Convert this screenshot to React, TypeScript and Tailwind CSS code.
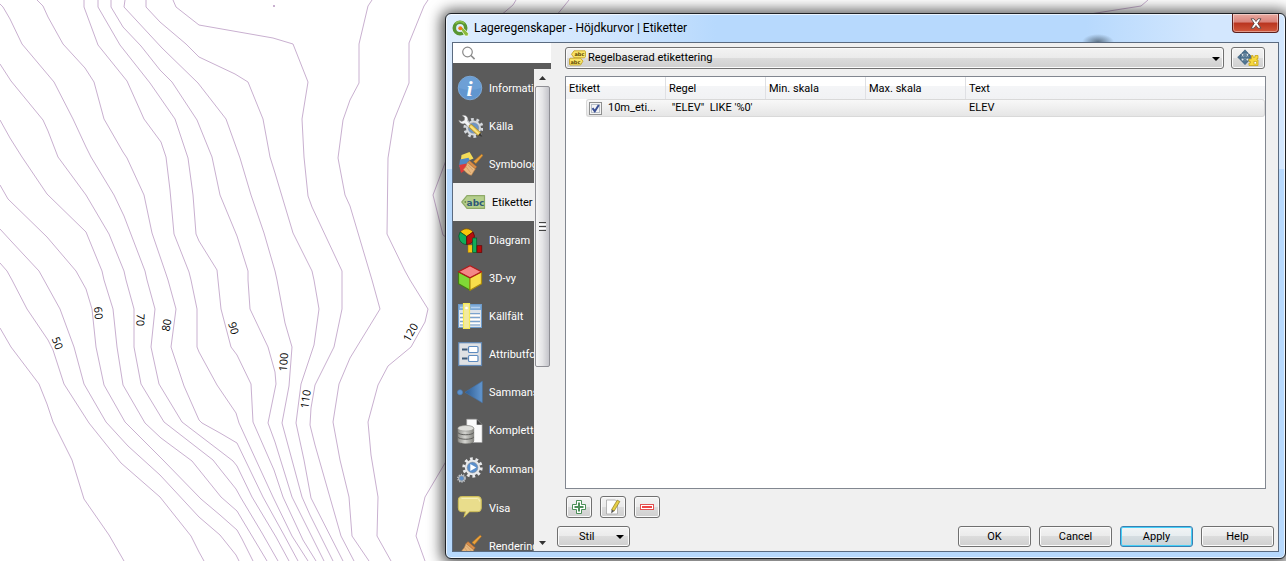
import type { ReactNode } from "react";

const contours: string[] = [
  "0,328 11,347 39,384 47,404 53,422 72,460 84,499 109,535 124,561",
  "0,263 7,271 12,280 27,309 48,340 53,350 64,384 89,423 121,463 160,497 191,536 199,552 204,561",
  "0,229 11,241 39,271 44,280 60,309 74,347 84,384 106,422 128,446 160,475 199,517 220,535 236,555 239,561",
  "0,185 8,199 47,237 76,271 81,280 86,289 92,309 96,347 104,385 125,422 163,460 201,499 220,515 237,530 242,539 253,561",
  "0,120 10,138 22,157 47,194 86,232 102,271 104,280 113,309 117,347 123,385 145,423 161,438 192,461 221,497 237,511 243,521 267,561",
  "0,64 11,81 43,120 48,131 58,157 86,195 109,234 124,271 126,280 134,309 134,347 141,384 164,422 213,460 220,469 236,489 241,498 262,533 278,561",
  "0,4 3,7 10,19 22,44 54,82 73,119 86,147 91,157 114,195 124,216 145,271 147,280 155,309 151,347 159,384 182,422 220,451 233,461 237,466 252,497 276,537 289,561",
  "37,0 43,6 48,17 63,44 85,68 94,82 104,119 123,152 127,158 144,195 152,233 166,274 168,280 176,309 171,347 184,386 199,420 202,423 220,433 237,443 263,497 284,535 298,561",
  "84,0 84,7 98,45 127,81 144,119 161,142 166,157 170,190 174,234 189,272 191,280 197,309 197,347 199,352 217,385 236,413 239,423 273,497 292,536 308,561",
  "98,0 98,7 120,45 150,83 175,119 188,158 193,195 196,234 199,241 217,270 218,280 221,309 231,347 237,355 251,384 253,422 274,470 283,497 303,540 316,561",
  "111,0 111,7 123,27 141,46 160,70 172,82 197,120 212,157 220,195 237,236 248,271 248,280 250,309 268,347 275,372 276,384 268,423 275,442 292,497 324,561",
  "125,0 124,7 162,48 198,83 226,119 240,158 251,195 264,233 275,271 277,280 285,323 292,347 289,386 282,423 302,497 310,515 333,561",
  "146,0 146,7 160,22 186,44 199,57 235,74 248,82 263,119 270,157 275,173 293,233 312,271 314,280 319,309 314,345 301,384 296,423 304,460 311,498 343,561",
  "173,0 176,7 199,25 273,38 293,44 308,82 302,119 304,157 308,196 312,207 342,271 342,309 334,347 315,385 311,408 310,425 315,445 341,536 354,561",
  "372,0 368,6 359,44 359,83 350,100 343,120 338,158 345,195 350,206 372,280 380,309 350,358 339,384 333,422 340,460 349,497 352,536 369,561",
  "428,0 424,6 409,43 409,83 394,120 388,158 387,234 405,271 410,280 428,309 425,322 411,347 388,366 378,385 368,422 371,455 378,497 377,536 391,561",
  "448,155 433,195 443,235 450,240",
  "448,458 425,497 416,536 425,561",
  "516,0 513,5 500,16",
  "569,0 565,5 556,16",
  "1148,0 1141,6 1090,14",
  "273,6 274,5 275,6 274,7 273,6",
];

const mapLabels = [
  { text: "50", x: 58, y: 343, angle: 68 },
  { text: "60", x: 99, y: 313, angle: 85 },
  { text: "70", x: 141, y: 320, angle: 92 },
  { text: "80", x: 166, y: 325, angle: -82 },
  { text: "90", x: 234, y: 328, angle: 74 },
  { text: "100", x: 283, y: 362, angle: -86 },
  { text: "110", x: 305, y: 399, angle: -82 },
  { text: "120", x: 410, y: 332, angle: -60 },
];

function ContourMap() {
  return (
    <svg className="absolute top-0 left-0" width="1286" height="561" viewBox="0 0 1286 561" aria-label="Höjdkurvor">
      {contours.map((points) => (
        <polyline key={points} points={points} fill="none" stroke="#c9b0d0" strokeWidth="1" />
      ))}
      {mapLabels.map((l) => (
        <text
          key={l.text}
          transform={`translate(${l.x} ${l.y}) rotate(${l.angle})`}
          textAnchor="middle"
          dominantBaseline="central"
          className="fill-black font-['Open_Sans',sans-serif] text-[11px]"
        >
          {l.text}
        </text>
      ))}
    </svg>
  );
}

function Icon({ children }: { children: ReactNode }) {
  return (
    <svg width="26" height="26" viewBox="0 0 26 26" className="shrink-0" aria-hidden="true">
      {children}
    </svg>
  );
}

function Gear({ cx, cy, r, body, hub }: { cx: number; cy: number; r: number; body: string; hub: string }) {
  const tooth = (2 * Math.PI * r) / 20;
  return (
    <g>
      <circle cx={cx} cy={cy} r={r} fill="none" stroke={body} strokeWidth={r * 0.34} strokeDasharray={`${tooth} ${tooth}`} />
      <circle cx={cx} cy={cy} r={r * 0.88} fill={body} />
      <circle cx={cx} cy={cy} r={r * 0.62} fill={hub} stroke="#8d8d8d" strokeWidth="0.5" />
    </g>
  );
}

const infoIcon = (
  <Icon>
    <circle cx="13" cy="13" r="11.8" fill="#6196cf" stroke="#86b1de" strokeWidth="0.8" />
    <path d="M2 13a11 11 0 0 1 22 0q-11 4-22 0z" fill="#75a6da" opacity=".6" />
    <text x="12.6" y="20.5" textAnchor="middle" className="fill-white font-['Liberation_Serif',serif] text-[22px] font-bold italic">
      i
    </text>
  </Icon>
);

const sourceIcon = (
  <Icon>
    <Gear cx={16.5} cy={15} r={8.6} body="#d5d9de" hub="#6d96c6" />
    <path d="M5 2.5c3-1 6 .6 6 4l-.3 1.6 8.8 9.4-2.3 2.3-9.3-9.2c-3 1-5.700-.4-6.200-3.500l3 1.300 2.600-1.200.2-2.700z" fill="#f4f5f6" stroke="#777" strokeWidth="0.5" />
    <path d="M12.200 12.200l2.600-.6 8.700 8-.3 2-2.200.9-8.600-8z" fill="#f3d35a" stroke="#93761b" strokeWidth="0.7" />
    <path d="M13.500 13.200l8.300 7.800" stroke="#fff0a0" strokeWidth="1" />
    <path d="M21 22.500l2.300-2.700 2 4z" fill="#3b3b3b" />
  </Icon>
);

const brush = (
  <g>
    <path d="M24.700 3.200l1.200 1.200-7 8.200-2.400-2z" fill="#eba23c" stroke="#b8761f" strokeWidth="0.6" />
    <path d="M12.500 9.500l7.300 6.300-1.600 2-7.700-6.300z" fill="#d98d48" stroke="#a0602a" strokeWidth="0.5" />
    <path d="M10.500 11.500l7.800 6.500-3.900 6.300c-2.600-.5-5.900-3-8.100-5.900 2.300-1.600 3.200-4 4.200-6.900z" fill="#e8b880" stroke="#bf8546" strokeWidth="0.6" />
    <path d="M9.300 16l4.500 6M11 14l5 5.200" stroke="#cf9657" strokeWidth="0.7" />
  </g>
);

const symbologyIcon = (
  <Icon>
    <path d="M4.500 4l8-3 4 6.500-6 2.500-7 1.500z" fill="#f4dc58" />
    <path d="M3 8.500l8.500-1.700 2 3.700-2 4-9.500 1.500z" fill="#5187c4" />
    <path d="M2 14l8-1.500-.5 6-5.500 3.500z" fill="#dc3a3a" />
    {brush}
  </Icon>
);

const labelIcon = (
  <svg width="25" height="26" viewBox="0 0 25 26" className="shrink-0" aria-hidden="true">
    <path d="M6 6.600h17.500v12.800H6L.8 13z" fill="#b5cf8c" stroke="#8faa68" strokeWidth="1.200" strokeLinejoin="round" />
    <circle cx="4.300" cy="13" r="0.900" fill="#6f8e46" />
    <text x="14.500" y="16.500" textAnchor="middle" className="fill-[#2e5878] font-['DejaVu_Sans',sans-serif] text-[9px] font-bold">
      abc
    </text>
  </svg>
);

const diagramIcon = (
  <Icon>
    <path d="M9.700 9.500L3.200 5A8 8 0 0 1 16 5z" fill="#f8c60a" stroke="#7b4b08" strokeWidth="0.700" />
    <path d="M9.700 9.500V17.500A8 8 0 0 1 3.200 5z" fill="#0fae5b" stroke="#054f27" strokeWidth="0.700" />
    <path d="M9.700 9.500L16 5A8 8 0 0 1 9.700 17.500z" fill="#b80f0f" stroke="#560606" strokeWidth="0.700" />
    <rect x="11" y="18" width="4.500" height="7.500" fill="#f9c412" stroke="#a87c00" strokeWidth="0.500" />
    <rect x="15.700" y="11" width="4" height="14.500" fill="#13ad5a" stroke="#075a2b" strokeWidth="0.700" />
    <rect x="20" y="18.700" width="4.800" height="6.800" fill="#b40b0b" stroke="#650505" strokeWidth="0.700" />
  </Icon>
);

const cubeIcon = (
  <Icon>
    <g strokeLinejoin="round" strokeWidth="1.200">
      <path d="M1.500 7L13 13v12.300L1.500 18.700z" fill="#80d936" stroke="#437f12" />
      <path d="M24.500 7L13 13v12.300l11.500-6.600z" fill="#f8de4b" stroke="#ac8c0d" />
      <path d="M13 .8l11.500 6L13 12.800 1.500 6.800z" fill="#f48787" stroke="#b31919" />
    </g>
  </Icon>
);

const fieldsIcon = (
  <Icon>
    <rect x="1.500" y="1.500" width="23" height="23" fill="#dde3ea" stroke="#6d9bcb" />
    <rect x="2" y="2" width="22" height="5" fill="#7fabd8" />
    <path d="M14 4.500h9M3 4.500h3" stroke="#b6d2ef" strokeWidth="1.500" />
    <path d="M3 10.500h20M3 14.500h20M3 18.500h20M3 22h20" stroke="#7ba3cf" strokeWidth="1" />
    <path d="M3 12.500h20M3 16.500h20M3 20.500h20" stroke="#fff" strokeWidth="1" />
    <rect x="6.500" y="0.600" width="6" height="25" fill="#f2e9a0" stroke="#f6ea52" strokeWidth="1.200" />
    <circle cx="9.500" cy="5" r="1.300" fill="#fff" />
  </Icon>
);

const formIcon = (
  <Icon>
    <rect x="1.700" y="1.700" width="22.800" height="22.800" fill="#dfe1e4" stroke="#6288b4" strokeWidth="1.200" />
    <path d="M5 8.500h5.500M5 17.500h5.500" stroke="#3e5a78" strokeWidth="2" />
    <rect x="11.500" y="5.500" width="9.500" height="6" rx="1" fill="#fff" stroke="#5f8cc0" strokeWidth="1.200" />
    <rect x="11.500" y="14.500" width="9.500" height="6" rx="1" fill="#fff" stroke="#5f8cc0" strokeWidth="1.200" />
  </Icon>
);

const joinIcon = (
  <Icon>
    <defs>
      <linearGradient id="join" x1="0" x2="1">
        <stop offset="0" stopColor="#2d5c92" />
        <stop offset="1" stopColor="#6397d0" />
      </linearGradient>
    </defs>
    <circle cx="3" cy="13.300" r="2.600" fill="#5f93cd" stroke="#4679b1" strokeWidth="0.600" />
    <path d="M8 13.300L25.300 2.200v21.600z" fill="url(#join)" stroke="#4574a9" strokeWidth="0.600" />
  </Icon>
);

const storageIcon = (
  <Icon>
    <defs>
      <linearGradient id="drum" x1="0" x2="1">
        <stop offset="0" stopColor="#8f8f8b" />
        <stop offset=".45" stopColor="#d5d5d1" />
        <stop offset="1" stopColor="#84847f" />
      </linearGradient>
    </defs>
    <path d="M9.700 1.200h10l5.400 5.600v17.700H9.700z" fill="#fbfbfb" stroke="#9a9a9a" strokeWidth="0.600" />
    <path d="M19.700 1.200v5.600h5.400z" fill="#444" />
    <path d="M.8 10.500c0-4 16-4 16 0v12.500c0 3.700-16 3.700-16 0z" fill="url(#drum)" stroke="#6c6c69" strokeWidth="0.500" />
    <ellipse cx="8.800" cy="10.300" rx="8" ry="2.800" fill="#dededa" stroke="#8a8a86" strokeWidth="0.500" />
    <path d="M.8 14.500c1.500 3 14.500 3 16 0M.8 19c1.500 3 14.500 3 16 0" fill="none" stroke="#565654" strokeWidth="0.900" />
  </Icon>
);

const actionIcon = (
  <Icon>
    <Gear cx={15.500} cy={10.500} r={8.700} body="#e9eaec" hub="#5b8fcb" />
    <path d="M13.300 7l6 3.500-6 3.500z" fill="#fff" />
    <Gear cx={4.600} cy={21.300} r={3.800} body="#c4c9cf" hub="#5b8fcb" />
  </Icon>
);

const displayIcon = (
  <Icon>
    <path d="M4.500 1.500h16.500q3.300 0 3.300 3.500v8q0 3.700-3.300 3.700h-8.500l-5.500 5.500 1.500-5.500h-4q-3.200 0-3.200-3.700V5q0-3.500 3.200-3.500z" fill="#e9dd8c" stroke="#cdbd58" strokeWidth="1" />
    <path d="M4.500 3.500h16q2 .2 2 3" fill="none" stroke="#f6efb6" strokeWidth="1" />
  </Icon>
);

const renderingIcon = (
  <Icon>
    <g transform="translate(-1.500 -1)">{brush}</g>
  </Icon>
);

const sections = [
  { label: "Information", icon: infoIcon },
  { label: "Källa", icon: sourceIcon },
  { label: "Symbologi", icon: symbologyIcon },
  { label: "Etiketter", icon: labelIcon, active: true },
  { label: "Diagram", icon: diagramIcon },
  { label: "3D-vy", icon: cubeIcon },
  { label: "Källfält", icon: fieldsIcon },
  { label: "Attributformulär", icon: formIcon },
  { label: "Sammanslagningar", icon: joinIcon },
  { label: "Kompletterande lagring", icon: storageIcon, tall: true },
  { label: "Kommandon", icon: actionIcon, tall: true },
  { label: "Visa", icon: displayIcon },
  { label: "Rendering", icon: renderingIcon },
];

function Sidebar() {
  return (
    <aside className="flex w-[98px] shrink-0 flex-col bg-[#5b5b5b]">
      <label className="flex h-5 shrink-0 items-center bg-white pl-2">
        <svg width="16" height="16" viewBox="0 0 16 16" fill="none" stroke="#8a8a8a" strokeWidth="1.200" className="shrink-0" aria-hidden="true">
          <circle cx="6.500" cy="7" r="4.800" />
          <path d="M10 10.500l3.600 3.600" strokeWidth="1.600" />
        </svg>
        <input type="search" aria-label="Sök" className="w-full min-w-0 bg-transparent outline-none" />
      </label>
      <div className="flex min-h-0 flex-1 basis-0 pt-[6px]">
        <nav className="min-w-0 flex-1 overflow-hidden">
          {sections.map((s) => (
            <button
              key={s.label}
              type="button"
              aria-current={s.active ? "page" : undefined}
              className={`flex w-full items-center gap-[6px] text-left whitespace-nowrap ${s.tall ? "h-[39px]" : "h-[38px]"} ${
                s.active ? "bg-[#f0f0f0] pl-2 text-black" : "pl-1 text-white"
              }`}
            >
              {s.icon}
              <span className="pt-px">{s.label}</span>
            </button>
          ))}
        </nav>
        <div className="flex w-[17px] shrink-0 flex-col bg-[#f0f0f0] px-px">
          <button type="button" aria-label="Rulla upp" className="flex h-[17px] items-center justify-center">
            <svg width="7" height="4" viewBox="0 0 7 4" aria-hidden="true">
              <path d="M0 4l3.500-4L7 4z" fill="#333" />
            </svg>
          </button>
          <div className="flex h-[281px] flex-col items-center justify-center gap-px rounded-[2px] border border-[#8f8f95] bg-linear-to-r from-[#f6f6f6] via-[#e4e4e6] to-[#c4c4ca]">
            <span className="h-px w-[7px] bg-[#444]" />
            <span className="h-px w-[7px] bg-white" />
            <span className="h-px w-[7px] bg-[#444]" />
            <span className="h-px w-[7px] bg-white" />
            <span className="h-px w-[7px] bg-[#444]" />
          </div>
          <button type="button" aria-label="Rulla ned" className="mt-auto flex h-[17px] items-center justify-center">
            <svg width="7" height="4" viewBox="0 0 7 4" aria-hidden="true">
              <path d="M0 0l3.500 4L7 0z" fill="#333" />
            </svg>
          </button>
        </div>
      </div>
    </aside>
  );
}

const face =
  "rounded-[3px] border border-[#707070] bg-[linear-gradient(#f3f3f3,#ebebeb_48%,#dcdcdc_50%,#cfcfcf)] shadow-[inset_0_0_0_1px_#fbfbfb]";
const defaultFace =
  "rounded-[3px] border border-[#3c7fb1] bg-[linear-gradient(#f1f4f5,#e7edf0_48%,#d5dde1_50%,#c8d3d8)] shadow-[inset_0_0_0_1px_#46d0f8]";

function Caret() {
  return (
    <svg width="8" height="4" viewBox="0 0 8 4" aria-hidden="true">
      <path d="M0 0h8L4 4z" fill="#000" />
    </svg>
  );
}

function RuleIcon() {
  return (
    <svg width="17" height="16" viewBox="0 0 17 16" className="pointer-events-none absolute top-[3px] left-1" aria-hidden="true">
      <path d="M5 .8h11l.5 1v5l-1 1H5L2.500 4.300z" fill="#fae468" stroke="#c09c1c" strokeWidth="0.800" />
      <path d="M1 8.200h10.500l2.500 2.900-2.500 3.900H1l-.5-1V9z" fill="#fae468" stroke="#c09c1c" strokeWidth="0.800" />
      <g className="fill-[#5a4600] font-['DejaVu_Sans',sans-serif] text-[5px] font-bold">
        <text x="5.500" y="6.200">abc</text>
        <text x="1.500" y="13.500">abc</text>
      </g>
    </svg>
  );
}

function PlacementIcon() {
  return (
    <svg width="22" height="18" viewBox="0 0 22 18" aria-hidden="true">
      <g fill="#4d7493" stroke="#2f4f6b" strokeWidth="0.500">
        <path d="M8 .8l3.300 3.500H4.700z" />
        <path d="M8 15.700l3.300-3.500H4.700z" />
        <path d="M.6 8.200l3.500-3.300v6.600z" />
        <path d="M15.400 8.200l-3.500-3.300v6.600z" />
      </g>
      <path d="M8 4.300v8M4 8.200h8" stroke="#4d7493" strokeWidth="1.500" />
      <g fill="#dfe8ef" stroke="#3b5f7d" strokeWidth="0.900">
        <circle cx="5.600" cy="5.900" r="1.400" />
        <circle cx="10.400" cy="5.900" r="1.400" />
        <circle cx="5.600" cy="10.600" r="1.400" />
        <circle cx="10.400" cy="10.600" r="1.400" />
      </g>
      <path d="M14.500 6.500H16v1.700h2V6.500h3v3h-1V11h1v5.500h-9V14h1.500v-1.500H12V10h2.500z" fill="#f7d93e" stroke="#c9a516" strokeWidth="0.800" />
      <rect x="17" y="12.500" width="2.500" height="2.500" fill="#fff" stroke="#c9a516" strokeWidth="0.700" />
    </svg>
  );
}

const th = "border-r border-[#dfe0e4] p-0 pt-px pl-[3px] text-left font-normal";
const td = "border-y border-[#d9d9d9] bg-linear-to-b from-[#f8f8f8] to-[#e6e6e6] p-0 pl-[3px]";

function RuleTable() {
  return (
    <div className="min-h-0 flex-1 border border-[#828790] bg-white">
      <table className="w-full table-fixed border-separate border-spacing-0">
        <colgroup>
          <col className="w-[100px]" />
          <col className="w-[100px]" />
          <col className="w-[100px]" />
          <col className="w-[100px]" />
          <col />
        </colgroup>
        <thead>
          <tr className="h-[22px] bg-[linear-gradient(#ffffff_40%,#f4f5f7_42%,#f1f2f4)]">
            <th className={th}>Etikett</th>
            <th className={th}>Regel</th>
            <th className={th}>Min. skala</th>
            <th className={th}>Max. skala</th>
            <th className="p-0 pt-px pl-[3px] text-left font-normal">Text</th>
          </tr>
        </thead>
        <tbody>
          <tr className="h-[18px] whitespace-pre">
            <td className="p-0 pl-5">
              <label className="flex h-[18px] items-center gap-[6px] rounded-l-[3px] border-y border-l border-[#d9d9d9] bg-linear-to-b from-[#f8f8f8] to-[#e6e6e6] pl-[2px]">
                <span className="relative flex size-[13px]">
                  <input type="checkbox" defaultChecked className="peer size-[13px] appearance-none border border-[#8e8f8f] bg-[#f4f4f4] shadow-[inset_0_0_0_1px_#f4f4f4,inset_0_0_0_2px_#b8bfc9]" />
                  <svg viewBox="0 0 13 13" className="pointer-events-none absolute inset-0 hidden peer-checked:block" aria-hidden="true">
                    <path d="M3.500 6.200l2.300 3 4-6.200" fill="none" stroke="#3a4f94" strokeWidth="2" />
                  </svg>
                </span>
                <span>10m_eti...</span>
              </label>
            </td>
            <td className={td}>{' "ELEV"  LIKE \'%0\''}</td>
            <td className={td} />
            <td className={td} />
            <td className={`${td} rounded-r-[3px] border-r`}>ELEV</td>
          </tr>
        </tbody>
      </table>
    </div>
  );
}

function RuleTools() {
  return (
    <div className="mr-[12px] ml-[15px] flex h-[22px] shrink-0 gap-2">
      <button type="button" aria-label="Lägg till regel" className={`flex w-[26px] items-center justify-center ${face}`}>
        <svg width="14" height="14" viewBox="0 0 14 14" aria-hidden="true">
          <path d="M4.500.5h5v4h4v5h-4v4h-5v-4h-4v-5h4z" fill="#fff" stroke="#4c8f58" strokeWidth="1" />
          <path d="M7 2.500v9M2.500 7h9" stroke="#4c8f58" strokeWidth="2" />
        </svg>
      </button>
      <button type="button" aria-label="Redigera regel" className={`flex w-[26px] items-center justify-center ${face}`}>
        <svg width="16" height="16" viewBox="0 0 16 16" aria-hidden="true">
          <path d="M1.500 1h9l2 2v12h-11z" fill="#fdfdfd" stroke="#a5a5a5" strokeWidth="0.800" />
          <path d="M12.200 1.200l2.600 1.300-5.600 9.500-2.600-1.400z" fill="#e6cf45" stroke="#8d7920" strokeWidth="0.700" />
          <path d="M6.600 10.600l2.600 1.400-3 2.500z" fill="#555" />
        </svg>
      </button>
      <button type="button" aria-label="Ta bort regel" className={`flex w-[26px] items-center justify-center ${face}`}>
        <svg width="14" height="6" viewBox="0 0 14 6" aria-hidden="true">
          <rect x="0.500" y="0.500" width="13" height="5" fill="#fff" stroke="#e05252" />
          <path d="M2 3h10" stroke="#f04545" strokeWidth="2" />
        </svg>
      </button>
    </div>
  );
}

function LabelingPage() {
  return (
    <main className="flex min-w-0 flex-1 flex-col bg-[#f0f0f0] pt-1 pb-1">
      <div className="mr-[13px] ml-[14px] flex h-[22px] shrink-0 gap-[7px]">
        <div className="relative flex flex-1">
          <select aria-label="Etikettering" className={`w-full appearance-none pl-[22px] text-black ${face}`}>
            <option>Regelbaserad etikettering</option>
          </select>
          <RuleIcon />
          <span className="pointer-events-none absolute top-[10px] right-1">
            <Caret />
          </span>
        </div>
        <button type="button" aria-label="Placeringsinställningar" className={`flex w-[34px] items-center justify-center ${face}`}>
          <PlacementIcon />
        </button>
      </div>
      <div className="mt-[7px] mr-[12px] mb-[7px] ml-[14px] flex min-h-0 flex-1 flex-col">
        <RuleTable />
      </div>
      <RuleTools />
      <div className="mt-2 flex h-[21px] shrink-0 gap-2 pr-1 pl-[6px]">
        <button type="button" className={`mr-auto flex w-[73px] items-center justify-between pr-[5px] pl-[21px] ${face}`}>
          Stil
          <Caret />
        </button>
        <button type="button" className={`w-[73px] ${face}`}>OK</button>
        <button type="button" className={`w-[73px] ${face}`}>Cancel</button>
        <button type="button" className={`w-[73px] ${defaultFace}`}>Apply</button>
        <button type="button" className={`w-[73px] ${face}`}>Help</button>
      </div>
    </main>
  );
}

function TitleBar() {
  return (
    <header className="flex h-7 shrink-0 items-center gap-[5px]">
      <svg width="17" height="17" viewBox="0 0 17 17" aria-hidden="true">
        <circle cx="8" cy="8" r="5.700" fill="none" stroke="#589632" strokeWidth="3.600" />
        <path d="M3.500 3.500a6.300 6.300 0 0 1 9 0" fill="none" stroke="#8cc04c" strokeWidth="1.500" />
        <path d="M7.200 7.200h3.200l6 6-.3 2.800h-2.900z" fill="#8dbb3c" stroke="#fff" strokeWidth="0.700" />
        <circle cx="8.300" cy="8.300" r="2" fill="#ee7913" />
      </svg>
      <h1 className="text-[12px] text-black">Lageregenskaper - Höjdkurvor | Etiketter</h1>
      <button
        type="button"
        aria-label="Stäng"
        className="ml-auto flex h-[19px] w-[47px] items-center justify-center self-start rounded-b-[4px] border border-t-0 border-[#5c1f1c] bg-[linear-gradient(#e9aaa0,#d9827a_45%,#b9341f_50%,#d2583c)] shadow-[inset_0_0_0_1px_rgba(255,255,255,0.4)]"
      >
        <svg width="12" height="11" viewBox="0 0 12 11" aria-hidden="true">
          <path d="M1 .8h3l2 2.700L8 .8h3L7.800 5.500l3.200 4.700H8L6 7.500l-2 2.700H1l3.200-4.700z" fill="#fff" stroke="#5a4a4a" strokeWidth="0.900" />
        </svg>
      </button>
    </header>
  );
}

export default function App() {
  return (
    <div className="relative min-h-screen overflow-hidden bg-white font-[Roboto,sans-serif] text-[11px] leading-4 text-black">
      <ContourMap />
      <section
        aria-label="Lageregenskaper"
        className="absolute top-[13px] right-0 bottom-[2px] left-[445px] flex flex-col rounded-[6px] border border-[#1f2226] bg-[#b7d9fd] bg-[radial-gradient(ellipse_16px_8px_at_652px_28px,#5f7488,transparent),linear-gradient(90deg,#dcecfe,#d3e7fe_150px,#b7d9fd_270px,#b7d9fd_640px,#d3e7fe_760px,#d3e7fe)] bg-[length:100%_155px] bg-no-repeat px-[6px] pb-[6px] shadow-[inset_0_0_0_1px_rgba(255,255,255,0.7),0_1px_14px_4px_rgba(0,0,0,0.65)]"
      >
        <TitleBar />
        <div className="flex min-h-0 flex-1 border border-[#5b6b80]">
          <Sidebar />
          <LabelingPage />
        </div>
      </section>
    </div>
  );
}
